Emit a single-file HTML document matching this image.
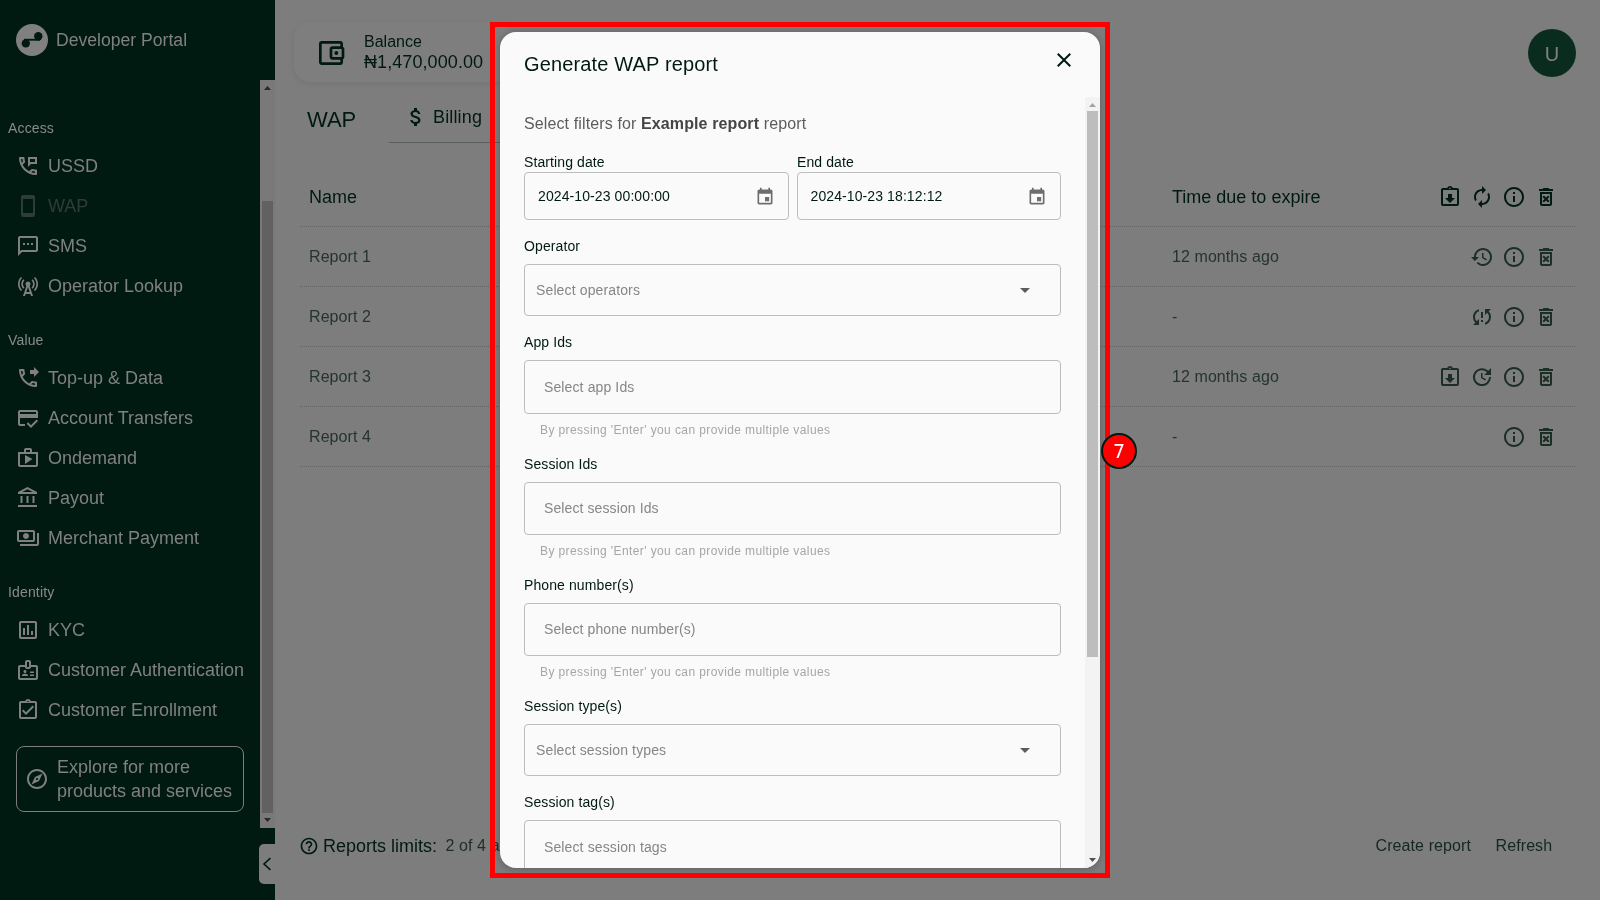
<!DOCTYPE html>
<html lang="en">
<head>
<meta charset="utf-8">
<title>Developer Portal</title>
<style>
*{box-sizing:border-box;margin:0;padding:0}
html,body{width:1600px;height:900px;overflow:hidden;background:#7d7d7d;font-family:"Liberation Sans",sans-serif;color:#011a11}
.abs{position:absolute}
.t{position:absolute;white-space:nowrap}
#side,#main,#modal,#anno{will-change:transform}
svg{display:block}
/* sidebar */
#side{position:absolute;left:0;top:0;width:275px;height:900px;background:#011a11;color:#808080}
#side .lbl{position:absolute;left:8px;font-size:14px;line-height:20px;color:#8a8a8a;letter-spacing:.15px}
#side .it{position:absolute;left:48px;font-size:18px;line-height:24px;color:#808080}
#side .ic{position:absolute;left:16px;width:24px;height:24px;fill:#808080}
#side .dis{color:#2e3d36}
#side .icdis{fill:#2e3d36}
/* main */
.dark{fill:#011a11}
.row{position:absolute;left:300px;width:1276px;height:1px;background-image:linear-gradient(to right,#5f6361 50%,rgba(0,0,0,0) 50%);background-size:2px 1px}
.rt{position:absolute;font-size:16px;line-height:20px;color:#25352e;white-space:nowrap;letter-spacing:.08px}
.hic{position:absolute;width:24px;height:24px;fill:#011a11}
.ric{position:absolute;width:24px;height:24px;fill:#1c2f27}
/* modal */
#modal{position:absolute;left:500px;top:32px;width:600px;height:836px;background:#fafafa;border-radius:16px;overflow:hidden;box-shadow:0 1px 6px 2px rgba(0,0,0,.16)}
#modal .lab{position:absolute;left:24px;font-size:14px;line-height:20px;color:#011a11;white-space:nowrap;letter-spacing:.1px}
#modal .box{position:absolute;left:24px;width:537px;border:1px solid #bdbdbd;border-radius:4px}
#modal .ph{position:absolute;font-size:14px;line-height:20px;color:#868686;white-space:nowrap;letter-spacing:.13px}
#modal .help{position:absolute;left:40px;font-size:12px;line-height:16px;color:#a6a6a6;letter-spacing:.4px;white-space:nowrap}
#modal .val{position:absolute;font-size:14px;line-height:20px;color:#011a11;white-space:nowrap;letter-spacing:.1px}
</style>
</head>
<body>
<div id="side">
  <svg class="abs" style="left:16px;top:24px" width="32" height="32" viewBox="0 0 32 32"><circle cx="16" cy="16" r="16" fill="#808080"/><circle cx="22.3" cy="12.2" r="4.2" fill="#011a11"/><circle cx="9.8" cy="19.4" r="4.2" fill="#011a11"/><rect x="8" y="14.8" width="16" height="1.9" fill="#011a11"/></svg>
  <div class="t" style="left:56px;top:28px;font-size:17.6px;line-height:24px;color:#808080">Developer Portal</div>

  <div class="lbl" style="top:118px">Access</div>
  <svg class="ic" style="top:154px" viewBox="0 0 24 24"><path d="M20 15.5c-1.250 0-2.450-.2-3.570-.57-.1-.03-.21-.05-.31-.05-.26 0-.51.1-.71.29l-2.200 2.200c-2.830-1.440-5.150-3.750-6.590-6.590l2.200-2.210c.28-.26.36-.65.25-1C8.700 6.450 8.500 5.250 8.500 4c0-.55-.45-1-1-1H4c-.55 0-1 .45-1 1 0 9.390 7.610 17 17 17 .55 0 1-.45 1-1v-3.500c0-.55-.45-1-1-1zM5.030 5h1.500c.07.88.22 1.750.46 2.590L5.790 8.800c-.41-1.210-.67-2.480-.76-3.800zM19 18.970c-1.320-.09-2.600-.35-3.800-.76l1.200-1.200c.85.24 1.720.39 2.600.45v1.510zM12 3v10l3-3h6V3h-9zm7 5h-5V5h5v3z"/></svg>
  <div class="it" style="top:154px">USSD</div>
  <svg class="ic icdis" style="top:194px" viewBox="0 0 24 24"><path d="M17 1.010L7 1c-1.100 0-1.990.9-1.990 2v18c0 1.100.89 2 1.990 2h10c1.100 0 2-.9 2-2V3c0-1.100-.9-1.990-2-1.990zM17 19H7V5h10v14z"/></svg>
  <div class="it dis" style="top:194px">WAP</div>
  <svg class="ic" style="top:234px" viewBox="0 0 24 24"><path d="M20 2H4c-1.100 0-2 .9-2 2v18l4-4h14c1.100 0 2-.9 2-2V4c0-1.100-.9-2-2-2zm0 14H5.170L4 17.170V4h16v12zM7 9h2v2H7zm4 0h2v2h-2zm4 0h2v2h-2z"/></svg>
  <div class="it" style="top:234px">SMS</div>
  <svg class="ic" style="top:274px" viewBox="0 0 24 24"><path d="M7.300 14.700l1.200-1.200c-1-1-1.500-2.300-1.500-3.500 0-1.300.5-2.600 1.500-3.500L7.300 5.300c-1.300 1.300-2 3-2 4.700s.7 3.400 2 4.700zM19.100 2.900l-1.200 1.200c1.600 1.600 2.400 3.800 2.400 5.900 0 2.100-.8 4.300-2.400 5.900l1.200 1.200c2-2 2.900-4.500 2.900-7.100 0-2.600-1-5.100-2.900-7.100zM6.100 4.100L4.900 2.900C3 4.900 2 7.400 2 10c0 2.600 1 5.100 2.900 7.100l1.200-1.200c-1.600-1.600-2.400-3.800-2.400-5.900 0-2.100.8-4.300 2.400-5.900zM16.700 14.700c1.300-1.300 2-3 2-4.700-.1-1.700-.7-3.400-2-4.700l-1.200 1.200c1 1 1.500 2.300 1.500 3.500 0 1.300-.5 2.600-1.500 3.500l1.200 1.200zM14.500 10c0-1.380-1.120-2.500-2.500-2.500S9.500 8.620 9.500 10c0 .76.340 1.420.87 1.880L7 22h2l.67-2h4.670l.66 2h2l-3.370-10.120c.53-.46.87-1.120.87-1.880zm-4.170 8L12 13l1.670 5h-3.340z"/></svg>
  <div class="it" style="top:274px">Operator Lookup</div>

  <div class="lbl" style="top:330px">Value</div>
  <svg class="ic" style="top:366px" viewBox="0 0 24 24"><path d="M20 15.510c-1.240 0-2.450-.2-3.570-.57-.35-.12-.75-.03-1.020.24l-2.200 2.200c-2.830-1.450-5.150-3.760-6.590-6.590l2.200-2.200c.28-.28.36-.67.25-1.020C8.700 6.450 8.500 5.250 8.500 4c0-.55-.45-1-1-1H4c-.55 0-1 .45-1 1 0 9.390 7.610 17 17 17 .55 0 1-.45 1-1v-3.490c0-.55-.45-1-1-1zM5.030 5h1.500c.07.89.22 1.760.46 2.590l-1.200 1.200c-.41-1.200-.67-2.470-.76-3.790zM19 18.970c-1.320-.09-2.590-.35-3.800-.75l1.190-1.190c.85.24 1.720.39 2.600.45v1.490zM18 11l5-5-5-5v3h-4v4h4z"/></svg>
  <div class="it" style="top:366px">Top-up &amp; Data</div>
  <svg class="ic" style="top:406px" viewBox="0 0 24 24"><path d="M20 4H4c-1.110 0-1.990.89-1.990 2L2 18c0 1.110.89 2 2 2h5v-2H4v-6h18V6c0-1.110-.89-2-2-2zm0 4H4V6h16v2zm-5.070 11.170l-2.830-2.830-1.410 1.410L14.930 22 22 14.930l-1.410-1.410-5.660 5.650z"/></svg>
  <div class="it" style="top:406px">Account Transfers</div>
  <svg class="ic" style="top:446px" viewBox="0 0 24 24"><path d="M16 6V4c0-1.110-.89-2-2-2h-4c-1.110 0-2 .89-2 2v2H2v13c0 1.110.89 2 2 2h16c1.110 0 2-.89 2-2V6h-6zm-6-2h4v2h-4V4zm10 15H4V8h16v11zM9 18l7.500-5L9 9z"/></svg>
  <div class="it" style="top:446px">Ondemand</div>
  <svg class="ic" style="top:486px" viewBox="0 0 24 24"><path d="M6.500 10h-2v7h2v-7zm6 0h-2v7h2v-7zm8.500 9H2v2h19v-2zm-2.500-9h-2v7h2v-7zm-7-6.740L16.710 6H6.290l5.210-2.740m0-2.260L2 6v2h19V6l-9.500-5z"/></svg>
  <div class="it" style="top:486px">Payout</div>
  <svg class="ic" style="top:526px" viewBox="0 0 24 24"><path d="M19 14V6c0-1.100-.9-2-2-2H3c-1.100 0-2 .9-2 2v8c0 1.100.9 2 2 2h14c1.100 0 2-.9 2-2zm-2 0H3V6h14v8zm-7-7c-1.660 0-3 1.340-3 3s1.340 3 3 3 3-1.340 3-3-1.340-3-3-3zm13 0v11c0 1.100-.9 2-2 2H4v-2h17V7h2z"/></svg>
  <div class="it" style="top:526px">Merchant Payment</div>

  <div class="lbl" style="top:582px">Identity</div>
  <svg class="ic" style="top:618px" viewBox="0 0 24 24"><path d="M19 3H5c-1.100 0-2 .9-2 2v14c0 1.100.9 2 2 2h14c1.100 0 2-.9 2-2V5c0-1.100-.9-2-2-2zm0 16H5V5h14v14zM7 10h2v7H7zm4-3h2v10h-2zm4 6h2v4h-2z"/></svg>
  <div class="it" style="top:618px">KYC</div>
  <svg class="ic" style="top:658px" viewBox="0 0 24 24"><path d="M14 13.500h4V15h-4v-1.500zM14 16.500h4V18h-4v-1.500zM20 7h-5V4c0-1.100-.9-2-2-2h-2c-1.100 0-2 .9-2 2v3H4c-1.100 0-2 .9-2 2v11c0 1.100.9 2 2 2h16c1.100 0 2-.9 2-2V9c0-1.100-.9-2-2-2zm-9-3h2v5h-2V4zm9 16H4V9h5c0 1.100.9 2 2 2h2c1.100 0 2-.9 2-2h5v11zM9 15c.83 0 1.500-.67 1.500-1.500S9.830 12 9 12s-1.500.67-1.500 1.500S8.170 15 9 15zm2.080 1.180C10.440 15.900 9.740 15.750 9 15.750s-1.440.15-2.080.43c-.56.24-.92.78-.92 1.390V18h6v-.43c0-.61-.36-1.150-.92-1.390z"/></svg>
  <div class="it" style="top:658px">Customer Authentication</div>
  <svg class="ic" style="top:698px" viewBox="0 0 24 24"><path d="M18 9l-1.410-1.420L10 14.170l-2.590-2.580L6 13l4 4zm1-6h-4.180C14.400 1.840 13.300 1 12 1c-1.300 0-2.400.84-2.820 2H5c-.14 0-.27.010-.4.040-.39.080-.74.280-1.010.55-.18.180-.33.400-.43.640-.1.230-.16.490-.16.770v14c0 .27.060.54.160.78s.25.450.43.640c.27.270.62.470 1.010.55.130.2.260.3.400.03h14c1.100 0 2-.9 2-2V5c0-1.100-.9-2-2-2zm-7-.25c.41 0 .75.340.75.750s-.34.750-.75.750-.75-.34-.75-.75.340-.75.750-.75zM19 19H5V5h14v14z"/></svg>
  <div class="it" style="top:698px">Customer Enrollment</div>

  <div class="abs" style="left:16px;top:746px;width:228px;height:66px;border:1px solid #7d7d7d;border-radius:8px"></div>
  <svg class="abs" style="left:25px;top:767px;fill:#808080" width="24" height="24" viewBox="0 0 24 24"><path d="M12 2C6.480 2 2 6.480 2 12s4.480 10 10 10 10-4.480 10-10S17.520 2 12 2zm0 18c-4.410 0-8-3.590-8-8s3.590-8 8-8 8 3.590 8 8-3.590 8-8 8zm-5.500-2.500l7.510-3.490L17.500 6.500 9.990 9.990 6.500 17.500zm5.500-6.600c.61 0 1.100.49 1.100 1.100s-.49 1.100-1.100 1.100-1.100-.49-1.100-1.100.49-1.100 1.100-1.100z"/></svg>
  <div class="t" style="left:57px;top:755px;font-size:18px;line-height:24px;color:#808080">Explore for more<br>products and services</div>

  <!-- sidebar scrollbar -->
  <div class="abs" style="left:260px;top:80px;width:15px;height:748px;background:#797979"></div>
  <div class="abs" style="left:262px;top:201px;width:11px;height:612px;background:#616161"></div>
  <svg class="abs" style="left:264px;top:86px" width="7" height="4" viewBox="0 0 7 4"><path d="M3.500 0L7 4H0z" fill="#282828"/></svg>
  <svg class="abs" style="left:264px;top:818px" width="7" height="4" viewBox="0 0 7 4"><path d="M0 0h7L3.500 4z" fill="#282828"/></svg>
  <!-- collapse handle -->
  <div class="abs" style="left:259px;top:844px;width:16px;height:40px;background:#7d7d7d;border-radius:5px 0 0 5px"></div>
  <svg class="abs" style="left:259px;top:852px" width="16" height="24" viewBox="0 0 16 24"><path d="M11.400 6.200L5 12l6.400 5.800" fill="none" stroke="#011a11" stroke-width="1.600"/></svg>
</div>

<div id="main">
  <!-- balance card -->
  <div class="abs" style="left:294px;top:22px;width:220px;height:60px;border-radius:16px;background:#7e7e7e;box-shadow:0 2px 5px 1px rgba(0,0,0,.06)"></div>
  <svg class="abs dark" style="left:315px;top:37px" width="32" height="32" viewBox="0 0 24 24"><path d="M21 7.280V5c0-1.100-.9-2-2-2H5c-1.110 0-2 .9-2 2v14c0 1.100.89 2 2 2h14c1.100 0 2-.9 2-2v-2.280c.59-.35 1-.98 1-1.720V9c0-.74-.41-1.370-1-1.720zM20 9v6h-7V9h7zM5 19V5h14v2h-6c-1.100 0-2 .9-2 2v6c0 1.100.9 2 2 2h6v2H5z"/><circle cx="16" cy="12" r="1.500"/></svg>
  <div class="t" style="left:364px;top:32px;font-size:16px;line-height:20px">Balance</div>
  <div class="t" style="left:364px;top:51px;font-size:18px;line-height:22px;letter-spacing:.08px">₦1,470,000.00</div>

  <!-- avatar -->
  <div class="abs" style="left:1528px;top:29px;width:48px;height:48px;border-radius:50%;background:#0a2c1f"></div>
  <div class="t" style="left:1528px;top:42px;width:48px;text-align:center;font-size:20px;line-height:24px;color:#808080">U</div>

  <!-- title + tabs -->
  <div class="t" style="left:307px;top:106px;font-size:22px;line-height:28px">WAP</div>
  <svg class="abs dark" style="left:404px;top:105px" width="24" height="24" viewBox="0 0 24 24"><path d="M11.800 10.900c-2.270-.59-3-1.200-3-2.150 0-1.090 1.010-1.850 2.700-1.850 1.780 0 2.440.85 2.500 2.100h2.210c-.07-1.720-1.120-3.300-3.210-3.810V3h-3v2.160c-1.940.42-3.500 1.680-3.500 3.610 0 2.310 1.910 3.460 4.700 4.130 2.500.6 3 1.480 3 2.410 0 .69-.49 1.790-2.700 1.790-2.060 0-2.870-.92-2.980-2.100h-2.200c.12 2.190 1.760 3.420 3.680 3.830V21h3v-2.150c1.950-.37 3.500-1.500 3.500-3.550 0-2.840-2.430-3.810-4.700-4.400z"/></svg>
  <div class="t" style="left:433px;top:105px;font-size:18px;line-height:24px;letter-spacing:.15px">Billing</div>
  <div class="abs" style="left:389px;top:142px;width:200px;height:1px;background:#595f5c"></div>

  <!-- table header -->
  <div class="t" style="left:309px;top:185px;font-size:18px;line-height:24px">Name</div>
  <div class="t" style="left:1172px;top:185px;font-size:18px;line-height:24px">Time due to expire</div>
  <svg class="hic" style="left:1438px;top:185px" viewBox="0 0 24 24"><path d="M12 18l5-5h-3V9h-4v4H7l5 5zm7-15h-4.180C14.400 1.840 13.300 1 12 1s-2.400.84-2.820 2H5c-.14 0-.27.010-.4.040-.39.080-.74.280-1.010.55-.18.180-.33.400-.43.640-.1.230-.16.490-.16.770v14c0 .27.060.54.160.78s.25.450.43.640c.27.270.62.470 1.010.55.130.2.260.3.400.03h14c1.100 0 2-.9 2-2V5c0-1.100-.9-2-2-2zm-7-.25c.41 0 .75.340.75.750s-.34.750-.75.750-.75-.34-.75-.75.340-.75.750-.75zM19 19H5V5h14v14z"/></svg>
  <svg class="hic" style="left:1470px;top:185px" viewBox="0 0 24 24"><path d="M12 6v3l4-4-4-4v3c-4.420 0-8 3.580-8 8 0 1.570.46 3.030 1.240 4.260L6.700 14.800c-.45-.83-.7-1.790-.7-2.800 0-3.310 2.690-6 6-6zm6.760 1.740L17.300 9.200c.44.840.7 1.790.7 2.800 0 3.310-2.690 6-6 6v-3l-4 4 4 4v-3c4.420 0 8-3.580 8-8 0-1.570-.46-3.030-1.240-4.260z"/></svg>
  <svg class="hic" style="left:1502px;top:185px" viewBox="0 0 24 24"><path d="M11 7h2v2h-2zm0 4h2v6h-2zm1-9C6.480 2 2 6.480 2 12s4.480 10 10 10 10-4.480 10-10S17.520 2 12 2zm0 18c-4.410 0-8-3.590-8-8s3.590-8 8-8 8 3.590 8 8-3.590 8-8 8z"/></svg>
  <svg class="hic" style="left:1534px;top:185px" viewBox="0 0 24 24"><path d="M14.120 10.470L12 12.590l-2.130-2.120-1.410 1.410L10.590 14l-2.120 2.120 1.410 1.410L12 15.410l2.120 2.120 1.410-1.410L13.410 14l2.120-2.120zM15.500 4l-1-1h-5l-1 1H5v2h14V4zM6 19c0 1.100.9 2 2 2h8c1.100 0 2-.9 2-2V7H6v12zM8 9h8v10H8V9z"/></svg>

  <!-- rows -->
  <div class="row" style="top:226px"></div>
  <div class="row" style="top:286px"></div>
  <div class="row" style="top:346px"></div>
  <div class="row" style="top:406px"></div>
  <div class="row" style="top:466px"></div>

  <div class="rt" style="left:309px;top:247px">Report 1</div>
  <div class="rt" style="left:1172px;top:247px">12 months ago</div>
  <svg class="ric" style="left:1470px;top:245px" viewBox="0 0 24 24"><path d="M13 3c-4.970 0-9 4.030-9 9H1l3.890 3.890.07.14L9 12H6c0-3.870 3.130-7 7-7s7 3.130 7 7-3.130 7-7 7c-1.930 0-3.680-.79-4.940-2.060l-1.420 1.420C8.270 19.990 10.510 21 13 21c4.970 0 9-4.030 9-9s-4.030-9-9-9zm-1 5v5l4.280 2.540.72-1.210-3.500-2.080V8H12z"/></svg>
  <svg class="ric" style="left:1502px;top:245px" viewBox="0 0 24 24"><path d="M11 7h2v2h-2zm0 4h2v6h-2zm1-9C6.480 2 2 6.480 2 12s4.480 10 10 10 10-4.480 10-10S17.520 2 12 2zm0 18c-4.410 0-8-3.590-8-8s3.590-8 8-8 8 3.590 8 8-3.590 8-8 8z"/></svg>
  <svg class="ric" style="left:1534px;top:245px" viewBox="0 0 24 24"><path d="M14.120 10.470L12 12.590l-2.130-2.120-1.410 1.410L10.590 14l-2.120 2.120 1.410 1.410L12 15.410l2.120 2.120 1.410-1.410L13.410 14l2.120-2.120zM15.500 4l-1-1h-5l-1 1H5v2h14V4zM6 19c0 1.100.9 2 2 2h8c1.100 0 2-.9 2-2V7H6v12zM8 9h8v10H8V9z"/></svg>

  <div class="rt" style="left:309px;top:307px">Report 2</div>
  <div class="rt" style="left:1172px;top:307px">-</div>
  <svg class="ric" style="left:1470px;top:305px" viewBox="0 0 24 24"><path d="M3 12c0 2.210.91 4.200 2.360 5.640L3 20h6v-6l-2.240 2.240C5.680 15.150 5 13.660 5 12c0-2.610 1.670-4.830 4-5.650V4.260C5.550 5.150 3 8.270 3 12zm8 5h2v-2h-2v2zM21 4h-6v6l2.240-2.240C18.320 8.850 19 10.340 19 12c0 2.610-1.670 4.830-4 5.650v2.090c3.450-.89 6-4.010 6-7.740 0-2.210-.91-4.200-2.360-5.640L21 4zm-10 9h2V7h-2v6z"/></svg>
  <svg class="ric" style="left:1502px;top:305px" viewBox="0 0 24 24"><path d="M11 7h2v2h-2zm0 4h2v6h-2zm1-9C6.480 2 2 6.480 2 12s4.480 10 10 10 10-4.480 10-10S17.520 2 12 2zm0 18c-4.410 0-8-3.590-8-8s3.590-8 8-8 8 3.590 8 8-3.590 8-8 8z"/></svg>
  <svg class="ric" style="left:1534px;top:305px" viewBox="0 0 24 24"><path d="M14.120 10.470L12 12.590l-2.130-2.120-1.410 1.410L10.590 14l-2.120 2.120 1.410 1.410L12 15.410l2.120 2.120 1.410-1.410L13.410 14l2.120-2.120zM15.500 4l-1-1h-5l-1 1H5v2h14V4zM6 19c0 1.100.9 2 2 2h8c1.100 0 2-.9 2-2V7H6v12zM8 9h8v10H8V9z"/></svg>

  <div class="rt" style="left:309px;top:367px">Report 3</div>
  <div class="rt" style="left:1172px;top:367px">12 months ago</div>
  <svg class="ric" style="left:1438px;top:365px" viewBox="0 0 24 24"><path d="M12 18l5-5h-3V9h-4v4H7l5 5zm7-15h-4.180C14.400 1.840 13.300 1 12 1s-2.400.84-2.820 2H5c-.14 0-.27.010-.4.040-.39.080-.74.280-1.010.55-.18.180-.33.400-.43.640-.1.230-.16.490-.16.770v14c0 .27.060.54.160.78s.25.450.43.640c.27.270.62.470 1.010.55.130.2.260.3.400.03h14c1.100 0 2-.9 2-2V5c0-1.100-.9-2-2-2zm-7-.25c.41 0 .75.340.75.750s-.34.750-.75.750-.75-.34-.75-.75.340-.75.750-.75zM19 19H5V5h14v14z"/></svg>
  <svg class="ric" style="left:1470px;top:365px" viewBox="0 0 24 24"><path d="M21 10.120h-6.780l2.740-2.820c-2.730-2.700-7.150-2.800-9.880-.1-2.730 2.710-2.730 7.080 0 9.790s7.150 2.710 9.880 0C18.320 15.650 19 14.080 19 12.100h2c0 1.980-.88 4.550-2.640 6.290-3.510 3.480-9.210 3.480-12.720 0-3.500-3.470-3.530-9.110-.02-12.580s9.140-3.470 12.650 0L21 3v7.120zM12.500 8v4.250l3.500 2.080-.72 1.210L11 13V8h1.500z"/></svg>
  <svg class="ric" style="left:1502px;top:365px" viewBox="0 0 24 24"><path d="M11 7h2v2h-2zm0 4h2v6h-2zm1-9C6.480 2 2 6.480 2 12s4.480 10 10 10 10-4.480 10-10S17.520 2 12 2zm0 18c-4.410 0-8-3.590-8-8s3.590-8 8-8 8 3.590 8 8-3.590 8-8 8z"/></svg>
  <svg class="ric" style="left:1534px;top:365px" viewBox="0 0 24 24"><path d="M14.120 10.470L12 12.590l-2.130-2.120-1.410 1.410L10.590 14l-2.120 2.120 1.410 1.410L12 15.410l2.120 2.120 1.410-1.410L13.410 14l2.120-2.120zM15.500 4l-1-1h-5l-1 1H5v2h14V4zM6 19c0 1.100.9 2 2 2h8c1.100 0 2-.9 2-2V7H6v12zM8 9h8v10H8V9z"/></svg>

  <div class="rt" style="left:309px;top:427px">Report 4</div>
  <div class="rt" style="left:1172px;top:427px">-</div>
  <svg class="ric" style="left:1502px;top:425px" viewBox="0 0 24 24"><path d="M11 7h2v2h-2zm0 4h2v6h-2zm1-9C6.480 2 2 6.480 2 12s4.480 10 10 10 10-4.480 10-10S17.520 2 12 2zm0 18c-4.410 0-8-3.590-8-8s3.590-8 8-8 8 3.590 8 8-3.590 8-8 8z"/></svg>
  <svg class="ric" style="left:1534px;top:425px" viewBox="0 0 24 24"><path d="M14.120 10.470L12 12.590l-2.130-2.120-1.410 1.410L10.590 14l-2.120 2.120 1.410 1.410L12 15.410l2.120 2.120 1.410-1.410L13.410 14l2.120-2.120zM15.500 4l-1-1h-5l-1 1H5v2h14V4zM6 19c0 1.100.9 2 2 2h8c1.100 0 2-.9 2-2V7H6v12zM8 9h8v10H8V9z"/></svg>

  <!-- footer -->
  <svg class="abs dark" style="left:299px;top:836px" width="20" height="20" viewBox="0 0 24 24"><path d="M11 18h2v-2h-2v2zm1-16C6.480 2 2 6.480 2 12s4.480 10 10 10 10-4.480 10-10S17.520 2 12 2zm0 18c-4.410 0-8-3.590-8-8s3.590-8 8-8 8 3.590 8 8-3.590 8-8 8zm0-14c-2.210 0-4 1.790-4 4h2c0-1.100.9-2 2-2s2 .9 2 2c0 2-3 1.750-3 5h2c0-2.250 3-2.500 3-5 0-2.210-1.790-4-4-4z"/></svg>
  <div class="t" style="left:323px;top:834px;font-size:18px;line-height:24px">Reports limits:</div>
  <div class="t" style="left:445.4px;top:836px;font-size:16px;line-height:20px;color:#1c2f27;letter-spacing:.12px">2 of 4 available</div>
  <div class="t" style="left:1375.500px;top:836px;font-size:16px;line-height:20px;color:#14281f;letter-spacing:.1px">Create report</div>
  <div class="t" style="left:1495.500px;top:836px;font-size:16px;line-height:20px;color:#14281f;letter-spacing:.1px">Refresh</div>
</div>

<div id="modal">
  <div class="t" style="left:24px;top:16px;font-size:20px;line-height:32px;letter-spacing:.15px;color:#011a11">Generate WAP report</div>
  <svg class="abs" style="left:552px;top:16px;fill:#011a11" width="24" height="24" viewBox="0 0 24 24"><path d="M19 6.410L17.590 5 12 10.590 6.410 5 5 6.410 10.590 12 5 17.590 6.410 19 12 13.410 17.590 19 19 17.590 13.410 12z"/></svg>

  <!-- scrollbar -->
  <div class="abs" style="left:585px;top:65px;width:15px;height:771px;background:#f3f3f3"></div>
  <div class="abs" style="left:587px;top:79px;width:11px;height:546px;background:#bdbdbd"></div>
  <svg class="abs" style="left:589px;top:71px" width="7" height="4" viewBox="0 0 7 4"><path d="M3.500 0L7 4H0z" fill="#a3a3a3"/></svg>
  <svg class="abs" style="left:589px;top:826px" width="7" height="4" viewBox="0 0 7 4"><path d="M0 0h7L3.500 4z" fill="#505050"/></svg>

  <div class="t" style="left:24px;top:82px;font-size:16px;line-height:20px;color:#5c5c5c;letter-spacing:.12px">Select filters for <b style="color:#454545">Example report</b> report</div>

  <div class="lab" style="top:120px">Starting date</div>
  <div class="lab" style="top:120px;left:297px">End date</div>
  <div class="box" style="top:140px;width:265px;height:48px"></div>
  <div class="box" style="top:140px;left:297px;width:264px;height:48px"></div>
  <div class="val" style="left:38px;top:154px">2024-10-23 00:00:00</div>
  <div class="val" style="left:310.5px;top:154px">2024-10-23 18:12:12</div>
  <svg class="abs" style="left:255px;top:155px;fill:#6e6e6e" width="20" height="20" viewBox="0 0 24 24"><path d="M17 12h-5v5h5v-5zM16 1v2H8V1H6v2H5c-1.110 0-1.990.9-1.990 2L3 19c0 1.100.89 2 2 2h14c1.100 0 2-.9 2-2V5c0-1.100-.9-2-2-2h-1V1h-2zm3 18H5V8h14v11z"/></svg>
  <svg class="abs" style="left:527px;top:155px;fill:#6e6e6e" width="20" height="20" viewBox="0 0 24 24"><path d="M17 12h-5v5h5v-5zM16 1v2H8V1H6v2H5c-1.110 0-1.990.9-1.990 2L3 19c0 1.100.89 2 2 2h14c1.100 0 2-.9 2-2V5c0-1.100-.9-2-2-2h-1V1h-2zm3 18H5V8h14v11z"/></svg>

  <div class="lab" style="top:204px">Operator</div>
  <div class="box" style="top:232px;height:52px"></div>
  <div class="ph" style="left:36px;top:248px">Select operators</div>
  <svg class="abs" style="left:513px;top:246px;fill:#5c5c5c" width="24" height="24" viewBox="0 0 24 24"><path d="M7 10l5 5 5-5z"/></svg>

  <div class="lab" style="top:300px">App Ids</div>
  <div class="box" style="top:328px;height:54px"></div>
  <div class="ph" style="left:44px;top:345px;letter-spacing:.12px">Select app Ids</div>
  <div class="help" style="top:390px">By pressing 'Enter' you can provide multiple values</div>

  <div class="lab" style="top:422px">Session Ids</div>
  <div class="box" style="top:450px;height:53px"></div>
  <div class="ph" style="left:44px;top:466px;letter-spacing:.1px">Select session Ids</div>
  <div class="help" style="top:511px">By pressing 'Enter' you can provide multiple values</div>

  <div class="lab" style="top:543px">Phone number(s)</div>
  <div class="box" style="top:571px;height:53px"></div>
  <div class="ph" style="left:44px;top:587px;letter-spacing:.1px">Select phone number(s)</div>
  <div class="help" style="top:632px">By pressing 'Enter' you can provide multiple values</div>

  <div class="lab" style="top:664px">Session type(s)</div>
  <div class="box" style="top:692px;height:52px"></div>
  <div class="ph" style="left:36px;top:708px">Select session types</div>
  <svg class="abs" style="left:513px;top:706px;fill:#5c5c5c" width="24" height="24" viewBox="0 0 24 24"><path d="M7 10l5 5 5-5z"/></svg>

  <div class="lab" style="top:760px">Session tag(s)</div>
  <div class="box" style="top:788px;height:54px"></div>
  <div class="ph" style="left:44px;top:805px;letter-spacing:.12px">Select session tags</div>
</div>

<div id="anno">
  <div class="abs" style="left:490px;top:22px;width:620px;height:856px;border:5px solid #ff0000"></div>
  <div class="abs" style="left:1101px;top:433px;width:36px;height:36px;border-radius:50%;background:#ff0000;border:2px solid #011a11"></div>
  <div class="t" style="left:1101px;top:438.500px;width:36px;text-align:center;font-family:'DejaVu Sans',sans-serif;font-size:19px;line-height:24px;color:#fff">7</div>
</div>

</body>
</html>
